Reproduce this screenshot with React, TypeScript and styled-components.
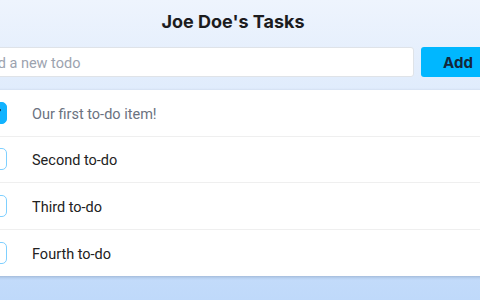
import React from "react";
import styled, { createGlobalStyle } from "styled-components";

const Global = createGlobalStyle`
  html, body { margin: 0; padding: 0; }
  body {
    min-height: 100vh;
    overflow: hidden;
    background: linear-gradient(180deg, #eef4fd 0%, #bfd9fa 100%);
    font-family: Inter, "Noto Sans", "Liberation Sans", sans-serif;
  }
`;

const Main = styled.main`
  width: 524px;
  margin-left: -29px;
  display: flex;
  flex-direction: column;
`;

const Header = styled.header`
  display: flex;
  flex-direction: column;
  gap: 13px;
  padding: 10px 0 13px;
`;

const Title = styled.h1`
  margin: 0;
  text-align: center;
  font-size: 18px;
  line-height: 24px;
  font-weight: 700;
  color: #1c1c1e;
`;

const Form = styled.form`
  display: flex;
  gap: 7px;
  margin: 0;
`;

const Input = styled.input`
  flex: 1;
  height: 30px;
  box-sizing: border-box;
  border: 1px solid #dfe3e8;
  border-radius: 3px;
  padding: 2px 8px 0;
  font-family: Roboto, "Liberation Sans", sans-serif;
  font-size: 14.5px;
  background: #fff;
  color: #222;
  &::placeholder { color: #9ca3af; }
`;

const AddButton = styled.button`
  width: 74px;
  height: 30px;
  border: none;
  border-radius: 3px;
  background: #00b7ff;
  color: #14273a;
  font: inherit;
  font-size: 15px;
  font-weight: 700;
`;

const List = styled.ul`
  list-style: none;
  margin: 0;
  padding: 0;
  background: #fff;
  box-shadow: 0 1px 3px rgba(40, 60, 90, 0.25);
`;

const Row = styled.li`
  height: 46.5px;
  box-sizing: border-box;
  display: flex;
  align-items: center;
  gap: 25px;
  padding-left: 14px;
  border-bottom: 1px solid #efefef;
  &:last-child { border-bottom: none; }
`;

const Box = styled.span<{ $checked: boolean }>`
  width: 22px;
  height: 22px;
  box-sizing: border-box;
  border-radius: 5px;
  border: 1.5px solid ${(p) => (p.$checked ? "#12b3ff" : "#7fd0ff")};
  background: ${(p) => (p.$checked ? "#12b3ff" : "#fff")};
  display: flex;
  align-items: center;
  justify-content: center;
`;

const Label = styled.span<{ $done: boolean }>`
  font-family: Roboto, "Liberation Sans", sans-serif;
  font-size: 14.5px;
  padding-top: 3px;
  color: ${(p) => (p.$done ? "#6b7280" : "#222")};
`;

const todos = [
  { text: "Our first to-do item!", done: true },
  { text: "Second to-do", done: false },
  { text: "Third to-do", done: false },
  { text: "Fourth to-do", done: false },
];

export default function App() {
  return (
    <>
      <Global />
      <Main>
        <Header>
          <Title>Joe Doe's Tasks</Title>
          <Form onSubmit={(e) => e.preventDefault()}>
            <Input placeholder="Add a new todo" />
            <AddButton type="submit">Add</AddButton>
          </Form>
        </Header>
        <List>
          {todos.map((t) => (
            <Row key={t.text}>
              <Box $checked={t.done}>
                {t.done && (
                  <svg width="14" height="14" viewBox="0 0 14 14">
                    <path d="M3 7.5l2.5 2.5L11 4" fill="none" stroke="#1a2a3a" strokeWidth="2" strokeLinecap="round" strokeLinejoin="round" />
                  </svg>
                )}
              </Box>
              <Label $done={t.done}>{t.text}</Label>
            </Row>
          ))}
        </List>
      </Main>
    </>
  );
}
